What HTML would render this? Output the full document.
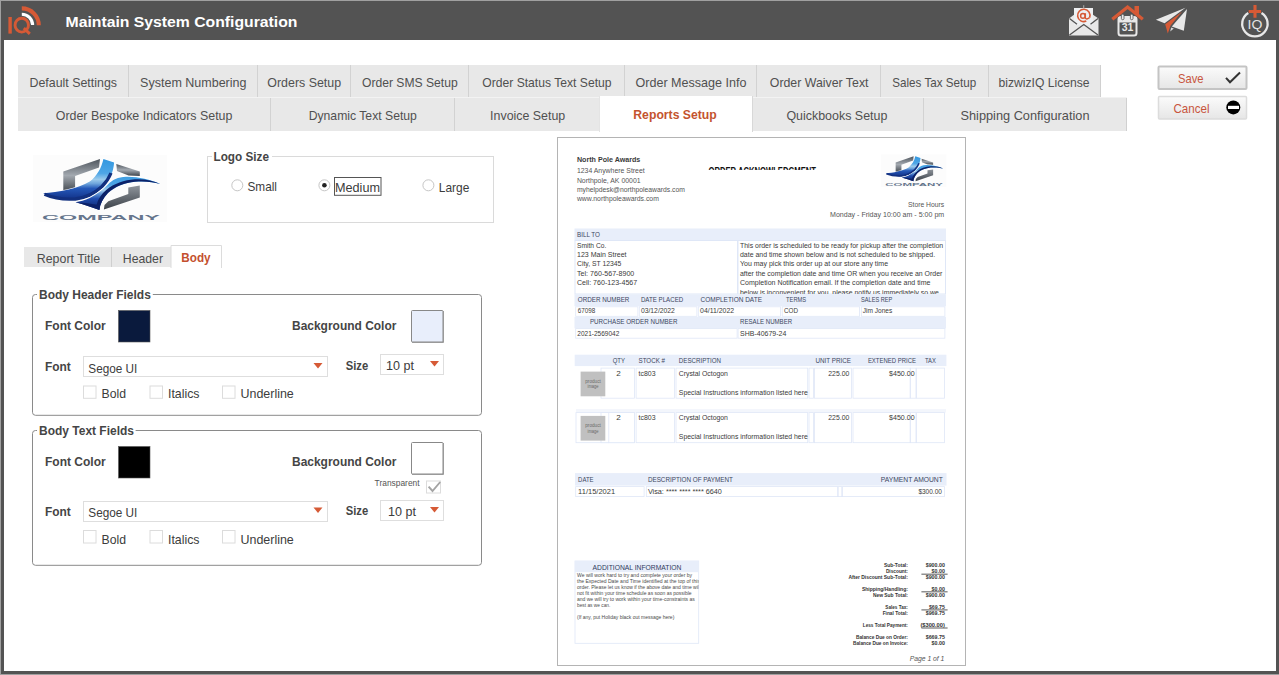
<!DOCTYPE html>
<html><head><meta charset="utf-8"><title>Maintain System Configuration</title>
<style>html,body{margin:0;padding:0;background:#fff;overflow:hidden;width:1279px;height:675px}
svg{display:block;font-family:"Liberation Sans", sans-serif}</style></head>
<body><svg width="1279" height="675" viewBox="0 0 1279 675">
<rect x="0" y="0" width="1279" height="675" fill="#ffffff" />
<rect x="0" y="0" width="1279" height="1" fill="#a0a0a0" />
<rect x="0" y="0" width="1" height="675" fill="#a0a0a0" />
<rect x="1" y="1" width="1278" height="39" fill="#535353" />
<rect x="1" y="40" width="3" height="634" fill="#535353" />
<rect x="1276" y="40" width="3" height="634" fill="#535353" />
<rect x="1" y="671" width="1278" height="3" fill="#535353" />
<rect x="0" y="674" width="1279" height="1" fill="#a0a0a0" />
<rect x="8.4" y="17" width="3.4" height="16.6" fill="#d65a36"/>
<ellipse cx="21.75" cy="25.15" rx="6.7" ry="6.95" fill="none" stroke="#d65a36" stroke-width="2.9"/>
<path d="M23.8 28.2 L29.8 33.8" stroke="#d65a36" stroke-width="3"/>
<path d="M21.8 14.2 A 10.8 10.8 0 0 1 32.6 25" fill="none" stroke="#ffffff" stroke-width="3.1"/>
<path d="M21.8 8.4 A 17 17 0 0 1 38.8 25.3" fill="none" stroke="#d65a36" stroke-width="4.1"/>
<text x="65.5" y="27" font-size="15" fill="#ffffff" font-weight="bold" textLength="232" lengthAdjust="spacingAndGlyphs" >Maintain System Configuration</text>
<path d="M1069 18.5 L1074 14.8 L1093 14.8 L1098.5 18.5 L1098.5 35.5 L1069 35.5 Z" fill="#e8e8e8"/>
<path d="M1074 25 L1074 8 L1093 8 L1093 25 Z" fill="#eef0f2"/>
<path d="M1089.6,17.6 A6.2,6.2 0 1 0 1086.3,21.1" fill="none" stroke="#d65a36" stroke-width="1.6"/>
<circle cx="1082.9" cy="15.9" r="2.3" fill="none" stroke="#d65a36" stroke-width="1.5"/>
<path d="M1085.3,13.2 L1085.3,17.6 Q1085.6,19.2 1087.4,18.8 L1089.6,17.6" fill="none" stroke="#d65a36" stroke-width="1.5"/>
<rect x="1083" y="5.2" width="1.3" height="3" fill="#9a9a9a"/>
<path d="M1069.5 35 L1083.8 24.5 L1098 35" fill="none" stroke="#535353" stroke-width="1.3"/>
<path d="M1069.5 18.5 L1077 24.2 M1098 18.5 L1090.5 24.2" fill="none" stroke="#535353" stroke-width="1.3"/>
<rect x="1118.5" y="17" width="18" height="18.5" rx="2.5" fill="#535353" stroke="#e8e8e8" stroke-width="2"/>
<rect x="1118.5" y="17" width="18" height="5.5" fill="#e8e8e8"/>
<rect x="1121.4" y="14.2" width="2.6" height="5.5" rx="1.2" fill="#e8e8e8" stroke="#535353" stroke-width="0.8"/>
<rect x="1130.4" y="14.2" width="2.6" height="5.5" rx="1.2" fill="#e8e8e8" stroke="#535353" stroke-width="0.8"/>
<text x="1127.6" y="31" font-size="10.3" font-weight="bold" fill="#e8e8e8" text-anchor="middle" textLength="11.7" lengthAdjust="spacingAndGlyphs">31</text>
<path d="M1112.3 19.3 L1127.6 7 L1142.8 19.3" fill="none" stroke="#d65a36" stroke-width="3.3"/>
<path d="M1134.5 6 L1139 6 L1139 15.5 L1134.5 12 Z" fill="#d65a36"/>
<path d="M1155.9,19.8 L1185.5,7.7 L1164.6,23.3 Z" fill="#e8e8e8"/>
<path d="M1182.2,11.6 L1165.2,24.2 L1167.8,33.5 L1170.6,25.5 Z" fill="#d65a36"/>
<path d="M1187,8.9 L1183.8,30.8 L1171.8,26.4 Z" fill="#e8e8e8"/>
<path d="M1170.2,31.6 L1171.2,27.6 L1173.8,28.4 Z" fill="#d8d8d8"/>
<path d="M1248.3 12.9 A 12.7 12.7 0 1 0 1261.5 12.9" fill="none" stroke="#e8e8e8" stroke-width="2.3"/>
<path d="M1248.7 11.45 L1261.1 11.45 M1255 5.1 L1255 17.8" stroke="#d65a36" stroke-width="3.1"/>
<text x="1247.5" y="29.3" font-size="13.5" fill="#e4e4e4" textLength="14.8" lengthAdjust="spacingAndGlyphs" >IQ</text>
<rect x="18" y="65" width="1083" height="32" fill="#e8e8e8" />
<rect x="1100" y="65" width="1" height="32" fill="#d0d0d0" />
<rect x="128" y="65" width="1" height="32" fill="#d2d2d2" />
<rect x="257" y="65" width="1" height="32" fill="#d2d2d2" />
<rect x="350" y="65" width="1" height="32" fill="#d2d2d2" />
<rect x="468" y="65" width="1" height="32" fill="#d2d2d2" />
<rect x="624" y="65" width="1" height="32" fill="#d2d2d2" />
<rect x="756" y="65" width="1" height="32" fill="#d2d2d2" />
<rect x="880" y="65" width="1" height="32" fill="#d2d2d2" />
<rect x="988" y="65" width="1" height="32" fill="#d2d2d2" />
<rect x="18" y="97" width="1109" height="1" fill="#f3f3f3" />
<rect x="18" y="98" width="1109" height="33" fill="#e8e8e8" />
<rect x="1126" y="98" width="1" height="33" fill="#d0d0d0" />
<rect x="270" y="98" width="1" height="33" fill="#d2d2d2" />
<rect x="454" y="98" width="1" height="33" fill="#d2d2d2" />
<rect x="599" y="98" width="1" height="33" fill="#d2d2d2" />
<rect x="752" y="98" width="1" height="33" fill="#d2d2d2" />
<rect x="923" y="98" width="1" height="33" fill="#d2d2d2" />
<rect x="599" y="96" width="153" height="36" fill="#ffffff" />
<rect x="599" y="96" width="1" height="36" fill="#e4e4e4" />
<rect x="752" y="96" width="1" height="36" fill="#d8d8d8" />
<text x="29.5" y="87" font-size="13" fill="#505050" textLength="87.5" lengthAdjust="spacingAndGlyphs" >Default Settings</text>
<text x="140.1" y="87" font-size="13" fill="#505050" textLength="106.4" lengthAdjust="spacingAndGlyphs" >System Numbering</text>
<text x="267.3" y="87" font-size="13" fill="#505050" textLength="73.80000000000001" lengthAdjust="spacingAndGlyphs" >Orders Setup</text>
<text x="362.0" y="87" font-size="13" fill="#505050" textLength="95.69999999999999" lengthAdjust="spacingAndGlyphs" >Order SMS Setup</text>
<text x="482.3" y="87" font-size="13" fill="#505050" textLength="129.2" lengthAdjust="spacingAndGlyphs" >Order Status Text Setup</text>
<text x="635.5" y="87" font-size="13" fill="#505050" textLength="111" lengthAdjust="spacingAndGlyphs" >Order Message Info</text>
<text x="769.8" y="87" font-size="13" fill="#505050" textLength="98.70000000000005" lengthAdjust="spacingAndGlyphs" >Order Waiver Text</text>
<text x="892.3" y="87" font-size="13" fill="#505050" textLength="83.80000000000007" lengthAdjust="spacingAndGlyphs" >Sales Tax Setup</text>
<text x="998.5" y="87" font-size="13" fill="#505050" textLength="91" lengthAdjust="spacingAndGlyphs" >bizwizIQ License</text>
<text x="55.75" y="120" font-size="13" fill="#505050" textLength="176.65" lengthAdjust="spacingAndGlyphs" >Order Bespoke Indicators Setup</text>
<text x="308.7" y="120" font-size="13" fill="#505050" textLength="108.19999999999999" lengthAdjust="spacingAndGlyphs" >Dynamic Text Setup</text>
<text x="490.1" y="120" font-size="13" fill="#505050" textLength="75.10000000000002" lengthAdjust="spacingAndGlyphs" >Invoice Setup</text>
<text x="786.4" y="120" font-size="13" fill="#505050" textLength="101.0" lengthAdjust="spacingAndGlyphs" >Quickbooks Setup</text>
<text x="960.5" y="120" font-size="13" fill="#505050" textLength="129" lengthAdjust="spacingAndGlyphs" >Shipping Configuration</text>
<text x="633.3" y="118.9" font-size="12.4" fill="#c4532e" font-weight="bold" textLength="83.5" lengthAdjust="spacingAndGlyphs" >Reports Setup</text>
<defs><linearGradient id="btn" x1="0" y1="0" x2="0" y2="1"><stop offset="0" stop-color="#fbfbfb"/><stop offset="1" stop-color="#e6e6e6"/></linearGradient>
<linearGradient id="hexg" x1="0" y1="0" x2="0" y2="1"><stop offset="0" stop-color="#4e555d"/><stop offset="0.5" stop-color="#a3a9b0"/><stop offset="1" stop-color="#3f454c"/></linearGradient>
<linearGradient id="blue1" x1="0" y1="0" x2="0" y2="1"><stop offset="0" stop-color="#3a9be0"/><stop offset="0.45" stop-color="#8ec3ea"/><stop offset="0.7" stop-color="#2a6cc0"/><stop offset="1" stop-color="#0f2f7a"/></linearGradient>
<linearGradient id="hexg2" x1="0" y1="0" x2="0" y2="1"><stop offset="0" stop-color="#8e949b"/><stop offset="1" stop-color="#3c4249"/></linearGradient>
<linearGradient id="blueA" x1="0" y1="0" x2="0" y2="1"><stop offset="0" stop-color="#3398e0"/><stop offset="0.35" stop-color="#4ea6e6"/><stop offset="0.5" stop-color="#9ccbec"/><stop offset="0.6" stop-color="#6fa6dc"/><stop offset="0.72" stop-color="#2458b8"/><stop offset="1" stop-color="#112f86"/></linearGradient>
<linearGradient id="blueB" x1="0" y1="0" x2="0" y2="1"><stop offset="0" stop-color="#3f9ee2"/><stop offset="0.25" stop-color="#4ea4e4"/><stop offset="0.4" stop-color="#a4cfee"/><stop offset="0.52" stop-color="#5d92d2"/><stop offset="0.66" stop-color="#1f4cae"/><stop offset="1" stop-color="#0b2166"/></linearGradient>
</defs>
<rect x="1158.5" y="66.5" width="88" height="22.5" fill="url(#btn)" stroke="#c4c4c4" stroke-width="2" rx="1"/>
<rect x="1158.5" y="96.5" width="88" height="22.5" fill="url(#btn)" stroke="#dcdcdc" stroke-width="1.5" rx="1"/>
<text x="1178" y="82.6" font-size="13" fill="#c8553d" textLength="25.5" lengthAdjust="spacingAndGlyphs" >Save</text>
<text x="1173.5" y="112.5" font-size="13" fill="#c8553d" textLength="36" lengthAdjust="spacingAndGlyphs" >Cancel</text>
<path d="M1226 77.8 L1230 82.2 L1240 72.5" fill="none" stroke="#333" stroke-width="2"/>
<circle cx="1233.3" cy="107.4" r="7" fill="#000"/>
<rect x="1228" y="105.8" width="11" height="3.2" fill="#fff"/>
<g transform="translate(33,155) scale(1.0) translate(-33,-155)">
<rect x="33" y="155" width="134" height="67" fill="#fcfcfc"/>
<path d="M100,159 L63.3,171.6 L63.3,192 L75.1,190 L75.1,176 L99,167.5 Z" fill="url(#hexg)"/>
<path d="M116.3,163.9 L139.8,171.6 L139.8,176 L128.5,175.5 L117,171 Z" fill="url(#hexg)"/>
<path d="M139.8,185.6 L139.8,197.6 L103.9,209.6 L104.5,205 L108.3,201.2 L128.3,194.1 L128.3,187.4 Z" fill="url(#hexg2)"/>
<path d="M43.1,193.2 C58,192.5 78,189 89.7,181.6 C97,176 101.5,168 103.4,159 L114.1,162.5 C113.5,172 110,180 103,187 C96,193.5 86,198.5 75.5,199.8 C64,200.5 52,198 43.1,193.2 Z" fill="url(#blueA)" stroke="#fff" stroke-width="1.4" paint-order="stroke"/>
<path d="M44.5,194.3 C53,198 64,199.8 75.5,199 C86,197.8 95,193 102,186.5 C106,182.5 109,178 111,173" fill="none" stroke="#12307f" stroke-width="3.3"/>
<path d="M160.3,183.9 C150,179.5 138,176.5 126,176.8 C118,177 112,180 108,184.5 C103,189.5 97,194 89.7,198 C85,200.3 80,201.5 75.5,202.2 C84,204.5 92,207 99.4,210 C100,204 103,198 108,193 C115,186.5 125,183 135,181.8 C145,181 153,182 160.3,183.9 Z" fill="url(#blueB)" stroke="#fff" stroke-width="1.4" paint-order="stroke"/>
<path d="M160.3,183.9 C153,182 145,181 135,181.8 C125,183 115,186.5 108,193 C103,198 100,204 99.4,210 C92,207 84,204.5 75.5,202.2 C84,202.6 91,203.8 96.6,204.8 C98,199 101.5,194 106.5,189.8 C114,183.6 124,180 135,179.3 C145,178.9 153,180.6 160.3,183.9 Z" fill="#0b2168"/>
<text x="101" y="219.5" font-size="7.8" font-weight="bold" fill="#65758c" text-anchor="middle" textLength="118" lengthAdjust="spacingAndGlyphs">COMPANY</text>
</g>
<rect x="207.5" y="156.5" width="286" height="66" fill="none" stroke="#dadada" stroke-width="1"/>
<rect x="212" y="150" width="60" height="10" fill="#ffffff" />
<text x="213.5" y="161.3" font-size="12" fill="#454545" font-weight="bold" textLength="55.5" lengthAdjust="spacingAndGlyphs" >Logo Size</text>
<circle cx="237.3" cy="185.3" r="5.5" fill="#fff" stroke="#c6c6c6" stroke-width="1"/>
<circle cx="324.4" cy="185.3" r="5.5" fill="#fff" stroke="#c6c6c6" stroke-width="1"/>
<circle cx="428.4" cy="185.3" r="5.5" fill="#fff" stroke="#c6c6c6" stroke-width="1"/>
<circle cx="324.4" cy="185.3" r="2.3" fill="#222"/>
<text x="247.5" y="191.3" font-size="13" fill="#3c3c3c" textLength="29.5" lengthAdjust="spacingAndGlyphs" >Small</text>
<text x="335" y="191.5" font-size="13" fill="#3c3c3c" textLength="45" lengthAdjust="spacingAndGlyphs" >Medium</text>
<text x="438.8" y="191.5" font-size="13" fill="#3c3c3c" textLength="30.5" lengthAdjust="spacingAndGlyphs" >Large</text>
<rect x="334.5" y="177.5" width="46.5" height="17.8" fill="none" stroke="#555" stroke-width="1"/>
<rect x="24" y="247" width="147" height="20" fill="#e8e8e8" />
<rect x="111" y="247" width="1" height="20" fill="#cfcfcf" />
<path d="M171 268 L171 245.5 L221.5 245.5 L221.5 268" fill="#fff" stroke="#dcdcdc" stroke-width="1"/>
<text x="36.8" y="262.5" font-size="13" fill="#4b4b4b" textLength="63.3" lengthAdjust="spacingAndGlyphs" >Report Title</text>
<text x="122.8" y="262.5" font-size="13" fill="#4b4b4b" textLength="40.2" lengthAdjust="spacingAndGlyphs" >Header</text>
<text x="181.3" y="261.7" font-size="13" fill="#c4502e" font-weight="bold" textLength="29.3" lengthAdjust="spacingAndGlyphs" >Body</text>
<rect x="32.5" y="294.5" width="449" height="120.80000000000001" rx="3" fill="none" stroke="#8a8a8a" stroke-width="1"/>
<rect x="37" y="288" width="115.8" height="10" fill="#ffffff" />
<text x="39" y="299.2" font-size="12" fill="#454545" font-weight="bold" textLength="111.8" lengthAdjust="spacingAndGlyphs" >Body Header Fields</text>
<text x="45" y="330.2" font-size="12" fill="#454545" font-weight="bold" textLength="60.7" lengthAdjust="spacingAndGlyphs" >Font Color</text>
<rect x="118.5" y="310.5" width="31.5" height="31.5" fill="#0a1a3d" stroke="#555" stroke-width="0.6"/>
<text x="292" y="330.2" font-size="12" fill="#454545" font-weight="bold" textLength="104.4" lengthAdjust="spacingAndGlyphs" >Background Color</text>
<rect x="411.5" y="310.5" width="31.5" height="31.5" rx="1" fill="#e8eefb" stroke="#888" stroke-width="1"/>
<path d="M443.5 311 L443.5 342.5 L412 342.5" fill="none" stroke="#999" stroke-width="1"/>
<text x="45" y="371.2" font-size="12" fill="#454545" font-weight="bold" textLength="25.8" lengthAdjust="spacingAndGlyphs" >Font</text>
<rect x="83.5" y="356.5" width="244" height="20" fill="#fff" stroke="#dedede" stroke-width="1"/>
<text x="88.3" y="372.6" font-size="13" fill="#3c3c3c" textLength="49" lengthAdjust="spacingAndGlyphs" >Segoe UI</text>
<path d="M313.5 363 L322.5 363 L318 368.5 Z" fill="#d65a36"/>
<text x="345.7" y="370" font-size="12" fill="#454545" font-weight="bold" textLength="22.5" lengthAdjust="spacingAndGlyphs" >Size</text>
<rect x="380.5" y="354.5" width="63" height="20" fill="#fff" stroke="#dedede" stroke-width="1"/>
<text x="386" y="370" font-size="13" fill="#3c3c3c" textLength="28" lengthAdjust="spacingAndGlyphs" >10 pt</text>
<path d="M430 361 L439 361 L434.5 366.5 Z" fill="#d65a36"/>
<rect x="83.5" y="386" width="12.5" height="12.3" fill="#fff" stroke="#dcdcdc" stroke-width="1"/>
<text x="101.5" y="398.2" font-size="13" fill="#3c3c3c" textLength="24.5" lengthAdjust="spacingAndGlyphs" >Bold</text>
<rect x="150.0" y="386" width="12.5" height="12.3" fill="#fff" stroke="#dcdcdc" stroke-width="1"/>
<text x="168.0" y="398.2" font-size="13" fill="#3c3c3c" textLength="31.5" lengthAdjust="spacingAndGlyphs" >Italics</text>
<rect x="222.5" y="386" width="12.5" height="12.3" fill="#fff" stroke="#dcdcdc" stroke-width="1"/>
<text x="240.5" y="398.2" font-size="13" fill="#3c3c3c" textLength="53.3" lengthAdjust="spacingAndGlyphs" >Underline</text>
<rect x="32.5" y="430.5" width="449" height="134.79999999999995" rx="3" fill="none" stroke="#8a8a8a" stroke-width="1"/>
<rect x="37" y="424" width="98.6" height="10" fill="#ffffff" />
<text x="39" y="435" font-size="12" fill="#454545" font-weight="bold" textLength="95" lengthAdjust="spacingAndGlyphs" >Body Text Fields</text>
<text x="45" y="465.8" font-size="12" fill="#454545" font-weight="bold" textLength="60.7" lengthAdjust="spacingAndGlyphs" >Font Color</text>
<rect x="118.5" y="446.5" width="31.5" height="31.5" fill="#000" stroke="#555" stroke-width="0.6"/>
<text x="292" y="465.8" font-size="12" fill="#454545" font-weight="bold" textLength="104.4" lengthAdjust="spacingAndGlyphs" >Background Color</text>
<rect x="411.5" y="442.5" width="31.5" height="31.5" rx="1" fill="#fff" stroke="#888" stroke-width="1"/>
<path d="M443.5 443 L443.5 474.5 L412 474.5" fill="none" stroke="#999" stroke-width="1"/>
<text x="374.6" y="486.4" font-size="9" fill="#555" textLength="45" lengthAdjust="spacingAndGlyphs" >Transparent</text>
<rect x="426.5" y="481" width="14" height="12" fill="#fff" stroke="#dcdcdc" stroke-width="1"/>
<path d="M428.6 486.6 L432.5 491 L440.2 482" fill="none" stroke="#a4a4a4" stroke-width="1.9"/>
<text x="45" y="515.7" font-size="12" fill="#454545" font-weight="bold" textLength="25.8" lengthAdjust="spacingAndGlyphs" >Font</text>
<rect x="83.5" y="501.5" width="244" height="20" fill="#fff" stroke="#dedede" stroke-width="1"/>
<text x="88.3" y="517.4" font-size="13" fill="#3c3c3c" textLength="49" lengthAdjust="spacingAndGlyphs" >Segoe UI</text>
<path d="M313.5 507.5 L322.5 507.5 L318 513 Z" fill="#d65a36"/>
<text x="345.7" y="515" font-size="12" fill="#454545" font-weight="bold" textLength="22.5" lengthAdjust="spacingAndGlyphs" >Size</text>
<rect x="380.5" y="500.5" width="63" height="20" fill="#fff" stroke="#dedede" stroke-width="1"/>
<text x="388" y="516" font-size="13" fill="#3c3c3c" textLength="28" lengthAdjust="spacingAndGlyphs" >10 pt</text>
<path d="M430 507 L439 507 L434.5 512.5 Z" fill="#d65a36"/>
<rect x="83.5" y="530.5" width="12.5" height="12.5" fill="#fff" stroke="#dcdcdc" stroke-width="1"/>
<text x="101.5" y="543.5" font-size="13" fill="#3c3c3c" textLength="24.5" lengthAdjust="spacingAndGlyphs" >Bold</text>
<rect x="150.0" y="530.5" width="12.5" height="12.5" fill="#fff" stroke="#dcdcdc" stroke-width="1"/>
<text x="168.0" y="543.5" font-size="13" fill="#3c3c3c" textLength="31.5" lengthAdjust="spacingAndGlyphs" >Italics</text>
<rect x="222.5" y="530.5" width="12.5" height="12.5" fill="#fff" stroke="#dcdcdc" stroke-width="1"/>
<text x="240.5" y="543.5" font-size="13" fill="#3c3c3c" textLength="53.3" lengthAdjust="spacingAndGlyphs" >Underline</text>
<rect x="557.5" y="137.5" width="408" height="528" fill="#fff" stroke="#b4b4b4" stroke-width="1"/>
<text x="576.9" y="162" font-size="6.6" fill="#3a3a3a" font-weight="bold" textLength="63.4" lengthAdjust="spacingAndGlyphs" >North Pole Awards</text>
<text x="576.9" y="172.9" font-size="6.6" fill="#555" textLength="67.8" lengthAdjust="spacingAndGlyphs" >1234 Anywhere Street</text>
<text x="576.9" y="182.5" font-size="6.6" fill="#555" textLength="63.7" lengthAdjust="spacingAndGlyphs" >Northpole, AK 00001</text>
<text x="576.9" y="191.7" font-size="6.6" fill="#555" textLength="108" lengthAdjust="spacingAndGlyphs" >myhelpdesk@northpoleawards.com</text>
<text x="576.9" y="201.3" font-size="6.6" fill="#555" textLength="82" lengthAdjust="spacingAndGlyphs" >www.northpoleawards.com</text>
<clipPath id="clipT"><rect x="700" y="160" width="130" height="10"/></clipPath>
<g clip-path="url(#clipT)">
<text x="708.5" y="174.7" font-size="10.5" fill="#111" font-weight="bold" textLength="107.5" lengthAdjust="spacingAndGlyphs" >ORDER ACKNOWLEDGMENT</text>
</g>
<g transform="translate(880.8,154.4) scale(0.49) translate(-33,-155)">
<rect x="33" y="155" width="134" height="67" fill="#fcfcfc"/>
<path d="M100,159 L63.3,171.6 L63.3,192 L75.1,190 L75.1,176 L99,167.5 Z" fill="url(#hexg)"/>
<path d="M116.3,163.9 L139.8,171.6 L139.8,176 L128.5,175.5 L117,171 Z" fill="url(#hexg)"/>
<path d="M139.8,185.6 L139.8,197.6 L103.9,209.6 L104.5,205 L108.3,201.2 L128.3,194.1 L128.3,187.4 Z" fill="url(#hexg2)"/>
<path d="M43.1,193.2 C58,192.5 78,189 89.7,181.6 C97,176 101.5,168 103.4,159 L114.1,162.5 C113.5,172 110,180 103,187 C96,193.5 86,198.5 75.5,199.8 C64,200.5 52,198 43.1,193.2 Z" fill="url(#blueA)" stroke="#fff" stroke-width="1.4" paint-order="stroke"/>
<path d="M44.5,194.3 C53,198 64,199.8 75.5,199 C86,197.8 95,193 102,186.5 C106,182.5 109,178 111,173" fill="none" stroke="#12307f" stroke-width="3.3"/>
<path d="M160.3,183.9 C150,179.5 138,176.5 126,176.8 C118,177 112,180 108,184.5 C103,189.5 97,194 89.7,198 C85,200.3 80,201.5 75.5,202.2 C84,204.5 92,207 99.4,210 C100,204 103,198 108,193 C115,186.5 125,183 135,181.8 C145,181 153,182 160.3,183.9 Z" fill="url(#blueB)" stroke="#fff" stroke-width="1.4" paint-order="stroke"/>
<path d="M160.3,183.9 C153,182 145,181 135,181.8 C125,183 115,186.5 108,193 C103,198 100,204 99.4,210 C92,207 84,204.5 75.5,202.2 C84,202.6 91,203.8 96.6,204.8 C98,199 101.5,194 106.5,189.8 C114,183.6 124,180 135,179.3 C145,178.9 153,180.6 160.3,183.9 Z" fill="#0b2168"/>
<text x="101" y="219.5" font-size="7.8" font-weight="bold" fill="#65758c" text-anchor="middle" textLength="118" lengthAdjust="spacingAndGlyphs">COMPANY</text>
</g>
<text x="944.2" y="206.9" font-size="6.6" fill="#555" text-anchor="end" textLength="36.2" lengthAdjust="spacingAndGlyphs" >Store Hours</text>
<text x="944.2" y="216.8" font-size="6.6" fill="#555" text-anchor="end" textLength="114.2" lengthAdjust="spacingAndGlyphs" >Monday - Friday 10:00 am - 5:00 pm</text>
<rect x="574.5" y="228.5" width="371.5" height="12" fill="#e8eefa" />
<text x="577" y="236.9" font-size="6.6" fill="#3c4660" textLength="23" lengthAdjust="spacingAndGlyphs" >BILL TO</text>
<rect x="575" y="240.5" width="162.5" height="53.5" fill="#fff" stroke="#dfe7f7" stroke-width="1"/>
<rect x="738" y="240.5" width="207.5" height="53.5" fill="#fff" stroke="#dfe7f7" stroke-width="1"/>
<text x="577" y="247.6" font-size="6.6" fill="#3a3a3a" textLength="29.3" lengthAdjust="spacingAndGlyphs" >Smith Co.</text>
<text x="577" y="256.98" font-size="6.6" fill="#3a3a3a" textLength="49.5" lengthAdjust="spacingAndGlyphs" >123 Main Street</text>
<text x="577" y="266.36" font-size="6.6" fill="#3a3a3a" textLength="44.3" lengthAdjust="spacingAndGlyphs" >City, ST 12345</text>
<text x="577" y="275.74" font-size="6.6" fill="#3a3a3a" textLength="57.3" lengthAdjust="spacingAndGlyphs" >Tel: 760-567-8900</text>
<text x="577" y="285.12" font-size="6.6" fill="#3a3a3a" textLength="60.2" lengthAdjust="spacingAndGlyphs" >Cell: 760-123-4567</text>
<clipPath id="clipB"><rect x="738" y="240" width="210" height="54"/></clipPath>
<g clip-path="url(#clipB)">
<text x="740" y="247.6" font-size="6.6" fill="#3a3a3a" textLength="203.2" lengthAdjust="spacingAndGlyphs" >This order is scheduled to be ready for pickup after the completion</text>
<text x="740" y="256.98" font-size="6.6" fill="#3a3a3a" textLength="195.1" lengthAdjust="spacingAndGlyphs" >date and time shown below and is not scheduled to be shipped.</text>
<text x="740" y="266.36" font-size="6.6" fill="#3a3a3a" textLength="148.1" lengthAdjust="spacingAndGlyphs" >You may pick this order up at our store any time</text>
<text x="740" y="275.74" font-size="6.6" fill="#3a3a3a" textLength="202.3" lengthAdjust="spacingAndGlyphs" >after the completion date and time OR when you receive an Order</text>
<text x="740" y="285.12" font-size="6.6" fill="#3a3a3a" textLength="190.4" lengthAdjust="spacingAndGlyphs" >Completion Notification email. If the completion date and time</text>
<text x="740" y="294.5" font-size="6.6" fill="#3a3a3a" textLength="198.8" lengthAdjust="spacingAndGlyphs" >below is inconvenient for you, please notify us immediately so we</text>
</g>
<rect x="574.5" y="294.3" width="371.5" height="12" fill="#e8eefa" />
<text x="577.8" y="302.3" font-size="6.4" fill="#3c4660" textLength="51.6" lengthAdjust="spacingAndGlyphs" >ORDER NUMBER</text>
<text x="640.9" y="302.3" font-size="6.4" fill="#3c4660" textLength="42.3" lengthAdjust="spacingAndGlyphs" >DATE PLACED</text>
<text x="700.5" y="302.3" font-size="6.4" fill="#3c4660" textLength="61.5" lengthAdjust="spacingAndGlyphs" >COMPLETION DATE</text>
<text x="786.1" y="302.3" font-size="6.4" fill="#3c4660" textLength="20.1" lengthAdjust="spacingAndGlyphs" >TERMS</text>
<text x="861" y="302.3" font-size="6.4" fill="#3c4660" textLength="31.4" lengthAdjust="spacingAndGlyphs" >SALES REP</text>
<rect x="575.7" y="306.8" width="62.19999999999993" height="9.5" fill="#fff" stroke="#dfe7f7" stroke-width="0.8"/>
<rect x="639.3" y="306.8" width="57.60000000000002" height="9.5" fill="#fff" stroke="#dfe7f7" stroke-width="0.8"/>
<rect x="698.3" y="306.8" width="82.10000000000002" height="9.5" fill="#fff" stroke="#dfe7f7" stroke-width="0.8"/>
<rect x="782.2" y="306.8" width="77.39999999999998" height="9.5" fill="#fff" stroke="#dfe7f7" stroke-width="0.8"/>
<rect x="861.3" y="306.8" width="83.60000000000002" height="9.5" fill="#fff" stroke="#dfe7f7" stroke-width="0.8"/>
<text x="577.8" y="313.4" font-size="6.4" fill="#3a3a3a" textLength="17.5" lengthAdjust="spacingAndGlyphs" >67098</text>
<text x="640.9" y="313.4" font-size="6.4" fill="#3a3a3a" textLength="34" lengthAdjust="spacingAndGlyphs" >03/12/2022</text>
<text x="700.1" y="313.4" font-size="6.4" fill="#3a3a3a" textLength="34" lengthAdjust="spacingAndGlyphs" >04/11/2022</text>
<text x="784" y="313.4" font-size="6.4" fill="#3a3a3a" textLength="14" lengthAdjust="spacingAndGlyphs" >COD</text>
<text x="862.8" y="313.4" font-size="6.4" fill="#3a3a3a" textLength="29.5" lengthAdjust="spacingAndGlyphs" >Jim Jones</text>
<rect x="574.5" y="316.9" width="371.5" height="11.5" fill="#e8eefa" />
<text x="589.9" y="323.7" font-size="6.4" fill="#3c4660" textLength="87.5" lengthAdjust="spacingAndGlyphs" >PURCHASE ORDER NUMBER</text>
<text x="740.1" y="323.7" font-size="6.4" fill="#3c4660" textLength="52" lengthAdjust="spacingAndGlyphs" >RESALE NUMBER</text>
<rect x="575.7" y="328.6" width="161.4" height="9.6" fill="#fff" stroke="#dfe7f7" stroke-width="0.8"/>
<rect x="738.1" y="328.6" width="206.8" height="9.6" fill="#fff" stroke="#dfe7f7" stroke-width="0.8"/>
<text x="577.3" y="335.6" font-size="6.4" fill="#3a3a3a" textLength="42" lengthAdjust="spacingAndGlyphs" >2021-2569042</text>
<text x="740.1" y="335.6" font-size="6.4" fill="#3a3a3a" textLength="46.2" lengthAdjust="spacingAndGlyphs" >SHB-40679-24</text>
<rect x="574.7" y="354.7" width="371.7" height="11.4" fill="#e8eefa" />
<text x="612.7" y="363" font-size="6.4" fill="#3c4660" textLength="12.2" lengthAdjust="spacingAndGlyphs" >QTY</text>
<text x="638.5" y="363" font-size="6.4" fill="#3c4660" textLength="26.6" lengthAdjust="spacingAndGlyphs" >STOCK #</text>
<text x="678.8" y="363" font-size="6.4" fill="#3c4660" textLength="42.3" lengthAdjust="spacingAndGlyphs" >DESCRIPTION</text>
<text x="815.5" y="363" font-size="6.4" fill="#3c4660" textLength="35.5" lengthAdjust="spacingAndGlyphs" >UNIT PRICE</text>
<text x="867.9" y="363" font-size="6.4" fill="#3c4660" textLength="48.1" lengthAdjust="spacingAndGlyphs" >EXTENED PRICE</text>
<text x="925" y="363" font-size="6.4" fill="#3c4660" textLength="10.9" lengthAdjust="spacingAndGlyphs" >TAX</text>
<rect x="601" y="368.1" width="33.60000000000002" height="30.099999999999966" fill="#fff" stroke="#dfe7f7" stroke-width="0.8"/>
<rect x="636.1" y="368.1" width="38.39999999999998" height="30.099999999999966" fill="#fff" stroke="#dfe7f7" stroke-width="0.8"/>
<rect x="676" y="368.1" width="131.70000000000005" height="30.099999999999966" fill="#fff" stroke="#dfe7f7" stroke-width="0.8"/>
<rect x="809" y="368.1" width="4.5" height="30.099999999999966" fill="#fff" stroke="#dfe7f7" stroke-width="0.8"/>
<rect x="814.4" y="368.1" width="37.10000000000002" height="30.099999999999966" fill="#fff" stroke="#dfe7f7" stroke-width="0.8"/>
<rect x="853" y="368.1" width="57.10000000000002" height="30.099999999999966" fill="#fff" stroke="#dfe7f7" stroke-width="0.8"/>
<rect x="910.5" y="368.1" width="5.5" height="30.099999999999966" fill="#fff" stroke="#dfe7f7" stroke-width="0.8"/>
<rect x="916.4" y="368.1" width="28.100000000000023" height="30.099999999999966" fill="#fff" stroke="#dfe7f7" stroke-width="0.8"/>
<rect x="576" y="409.1" width="370" height="3.5" fill="#f3f6fc" />
<rect x="576" y="412.6" width="32.8" height="30.1" fill="#fff" stroke="#dfe7f7" stroke-width="0.8"/>
<rect x="601" y="412.6" width="33.60000000000002" height="30.099999999999966" fill="#fff" stroke="#dfe7f7" stroke-width="0.8"/>
<rect x="636.1" y="412.6" width="38.39999999999998" height="30.099999999999966" fill="#fff" stroke="#dfe7f7" stroke-width="0.8"/>
<rect x="676" y="412.6" width="131.70000000000005" height="30.099999999999966" fill="#fff" stroke="#dfe7f7" stroke-width="0.8"/>
<rect x="809" y="412.6" width="4.5" height="30.099999999999966" fill="#fff" stroke="#dfe7f7" stroke-width="0.8"/>
<rect x="814.4" y="412.6" width="37.10000000000002" height="30.099999999999966" fill="#fff" stroke="#dfe7f7" stroke-width="0.8"/>
<rect x="853" y="412.6" width="57.10000000000002" height="30.099999999999966" fill="#fff" stroke="#dfe7f7" stroke-width="0.8"/>
<rect x="910.5" y="412.6" width="5.5" height="30.099999999999966" fill="#fff" stroke="#dfe7f7" stroke-width="0.8"/>
<rect x="916.4" y="412.6" width="28.100000000000023" height="30.099999999999966" fill="#fff" stroke="#dfe7f7" stroke-width="0.8"/>
<rect x="608.8" y="412.6" width="25.8" height="30.1" fill="#fff" stroke="#dfe7f7" stroke-width="0.8"/>
<rect x="580.6" y="371.6" width="24.7" height="24.7" fill="#c0c0c0" />
<text x="593" y="382.6" font-size="4.6" fill="#6a6a6a" text-anchor="middle" textLength="15.5" lengthAdjust="spacingAndGlyphs" >product</text>
<text x="593" y="388.3" font-size="4.6" fill="#6a6a6a" text-anchor="middle" textLength="11" lengthAdjust="spacingAndGlyphs" >image</text>
<text x="616.3" y="376" font-size="6.6" fill="#3a3a3a" textLength="4.5" lengthAdjust="spacingAndGlyphs" >2</text>
<text x="638.5" y="376" font-size="6.6" fill="#3a3a3a" textLength="17" lengthAdjust="spacingAndGlyphs" >tc803</text>
<text x="678.8" y="376" font-size="6.6" fill="#3a3a3a" textLength="49.1" lengthAdjust="spacingAndGlyphs" >Crystal Octogon</text>
<text x="678.8" y="394.7" font-size="6.6" fill="#3a3a3a" textLength="129" lengthAdjust="spacingAndGlyphs" >Special Instructions information listed here</text>
<text x="849.3" y="376" font-size="6.9" fill="#3a3a3a" text-anchor="end" textLength="21" lengthAdjust="spacingAndGlyphs" >225.00</text>
<text x="914.6" y="376" font-size="6.9" fill="#3a3a3a" text-anchor="end" textLength="25.5" lengthAdjust="spacingAndGlyphs" >$450.00</text>
<rect x="580.6" y="415.90000000000003" width="24.7" height="24.7" fill="#c0c0c0" />
<text x="593" y="426.90000000000003" font-size="4.6" fill="#6a6a6a" text-anchor="middle" textLength="15.5" lengthAdjust="spacingAndGlyphs" >product</text>
<text x="593" y="432.6" font-size="4.6" fill="#6a6a6a" text-anchor="middle" textLength="11" lengthAdjust="spacingAndGlyphs" >image</text>
<text x="616.3" y="420.3" font-size="6.6" fill="#3a3a3a" textLength="4.5" lengthAdjust="spacingAndGlyphs" >2</text>
<text x="638.5" y="420.3" font-size="6.6" fill="#3a3a3a" textLength="17" lengthAdjust="spacingAndGlyphs" >tc803</text>
<text x="678.8" y="420.3" font-size="6.6" fill="#3a3a3a" textLength="49.1" lengthAdjust="spacingAndGlyphs" >Crystal Octogon</text>
<text x="678.8" y="439.0" font-size="6.6" fill="#3a3a3a" textLength="129" lengthAdjust="spacingAndGlyphs" >Special Instructions information listed here</text>
<text x="849.3" y="420.3" font-size="6.9" fill="#3a3a3a" text-anchor="end" textLength="21" lengthAdjust="spacingAndGlyphs" >225.00</text>
<text x="914.6" y="420.3" font-size="6.9" fill="#3a3a3a" text-anchor="end" textLength="25.5" lengthAdjust="spacingAndGlyphs" >$450.00</text>
<rect x="575" y="473.1" width="371.5" height="12.5" fill="#e8eefa" />
<text x="578.1" y="481.9" font-size="6.4" fill="#3c4660" textLength="15.5" lengthAdjust="spacingAndGlyphs" >DATE</text>
<text x="647.9" y="481.9" font-size="6.4" fill="#3c4660" textLength="85" lengthAdjust="spacingAndGlyphs" >DESCRIPTION OF PAYMENT</text>
<text x="942.8" y="481.9" font-size="6.4" fill="#3c4660" text-anchor="end" textLength="62" lengthAdjust="spacingAndGlyphs" >PAYMENT AMOUNT</text>
<rect x="575.7" y="486.6" width="68.39999999999998" height="10" fill="#fff" stroke="#dfe7f7" stroke-width="0.8"/>
<rect x="646.3" y="486.6" width="191.4000000000001" height="10" fill="#fff" stroke="#dfe7f7" stroke-width="0.8"/>
<rect x="838.2" y="486.6" width="3.599999999999909" height="10" fill="#fff" stroke="#dfe7f7" stroke-width="0.8"/>
<rect x="842.4" y="486.6" width="102.0" height="10" fill="#fff" stroke="#dfe7f7" stroke-width="0.8"/>
<text x="578.1" y="493.8" font-size="6.4" fill="#3a3a3a" textLength="37" lengthAdjust="spacingAndGlyphs" >11/15/2021</text>
<text x="647.9" y="493.8" font-size="6.4" fill="#3a3a3a" textLength="74" lengthAdjust="spacingAndGlyphs" >Visa: **** **** **** 6640</text>
<text x="941.9" y="493.8" font-size="6.4" fill="#3a3a3a" text-anchor="end" textLength="23.5" lengthAdjust="spacingAndGlyphs" >$300.00</text>
<rect x="575" y="561" width="123.7" height="82.3" fill="#fff" stroke="#dfe7f7" stroke-width="0.8"/>
<rect x="575" y="561" width="123.7" height="11.2" fill="#e8eefa" />
<text x="592.6" y="569.6" font-size="7" fill="#2e3a5c" textLength="88.8" lengthAdjust="spacingAndGlyphs" >ADDITIONAL INFORMATION</text>
<clipPath id="clipA"><rect x="575" y="572" width="123.7" height="72"/></clipPath>
<g clip-path="url(#clipA)">
<text x="577" y="576.7" font-size="5" fill="#4a4a4a" textLength="115.1" lengthAdjust="spacingAndGlyphs" >We will work hard to try and complete your order by</text>
<text x="577" y="582.6800000000001" font-size="5" fill="#4a4a4a" textLength="123" lengthAdjust="spacingAndGlyphs" >the Expected Date and Time identified at the top of this</text>
<text x="577" y="588.6600000000001" font-size="5" fill="#4a4a4a" textLength="123" lengthAdjust="spacingAndGlyphs" >order. Please let us know if the above date and time will</text>
<text x="577" y="594.6400000000001" font-size="5" fill="#4a4a4a" textLength="114.6" lengthAdjust="spacingAndGlyphs" >not fit within your time schedule as soon as possible</text>
<text x="577" y="600.62" font-size="5" fill="#4a4a4a" textLength="117.8" lengthAdjust="spacingAndGlyphs" >and we will try to work within your time-constraints as</text>
<text x="577" y="606.6" font-size="5" fill="#4a4a4a" textLength="33.3" lengthAdjust="spacingAndGlyphs" >best as we can.</text>
<text x="577" y="619.1" font-size="5" fill="#4a4a4a" textLength="97.3" lengthAdjust="spacingAndGlyphs" >(If any, put Holiday black out message here)</text>
</g>
<text x="907.9" y="566.9" font-size="5" fill="#333" font-weight="bold" text-anchor="end" textLength="24.0" lengthAdjust="spacingAndGlyphs" >Sub-Total:</text>
<text x="944.9" y="566.9" font-size="5" fill="#333" font-weight="bold" text-anchor="end" textLength="19.2" lengthAdjust="spacingAndGlyphs" >$900.00</text>
<text x="907.9" y="573.1" font-size="5" fill="#333" font-weight="bold" text-anchor="end" textLength="22.0" lengthAdjust="spacingAndGlyphs" >Discount:</text>
<text x="944.9" y="573.1" font-size="5" fill="#333" font-weight="bold" text-anchor="end" textLength="13.3" lengthAdjust="spacingAndGlyphs" >$0.00</text>
<rect x="921.4" y="573.6" width="26.2" height="1.2" fill="#777" />
<text x="907.9" y="578.9" font-size="5" fill="#333" font-weight="bold" text-anchor="end" textLength="59.5" lengthAdjust="spacingAndGlyphs" >After Discount Sub-Total:</text>
<text x="944.9" y="578.9" font-size="5" fill="#333" font-weight="bold" text-anchor="end" textLength="19.2" lengthAdjust="spacingAndGlyphs" >$900.00</text>
<text x="907.9" y="590.7" font-size="5" fill="#333" font-weight="bold" text-anchor="end" textLength="46.0" lengthAdjust="spacingAndGlyphs" >Shipping/Handling:</text>
<text x="944.9" y="590.7" font-size="5" fill="#333" font-weight="bold" text-anchor="end" textLength="13.3" lengthAdjust="spacingAndGlyphs" >$0.00</text>
<rect x="921.4" y="591.2" width="26.2" height="1.2" fill="#777" />
<text x="907.9" y="596.7" font-size="5" fill="#333" font-weight="bold" text-anchor="end" textLength="35.0" lengthAdjust="spacingAndGlyphs" >New Sub Total:</text>
<text x="944.9" y="596.7" font-size="5" fill="#333" font-weight="bold" text-anchor="end" textLength="19.2" lengthAdjust="spacingAndGlyphs" >$900.00</text>
<text x="907.9" y="608.8" font-size="5" fill="#333" font-weight="bold" text-anchor="end" textLength="22.600000000000023" lengthAdjust="spacingAndGlyphs" >Sales Tax:</text>
<text x="944.9" y="608.8" font-size="5" fill="#333" font-weight="bold" text-anchor="end" textLength="16" lengthAdjust="spacingAndGlyphs" >$69.75</text>
<rect x="921.4" y="609.3" width="26.2" height="1.2" fill="#777" />
<text x="907.9" y="614.9" font-size="5" fill="#333" font-weight="bold" text-anchor="end" textLength="25.199999999999932" lengthAdjust="spacingAndGlyphs" >Final Total:</text>
<text x="944.9" y="614.9" font-size="5" fill="#333" font-weight="bold" text-anchor="end" textLength="19.2" lengthAdjust="spacingAndGlyphs" >$969.75</text>
<text x="907.9" y="626.9" font-size="5" fill="#333" font-weight="bold" text-anchor="end" textLength="45.10000000000002" lengthAdjust="spacingAndGlyphs" >Less Total Payment:</text>
<text x="944.9" y="626.9" font-size="5" fill="#333" font-weight="bold" text-anchor="end" textLength="24.5" lengthAdjust="spacingAndGlyphs" >($300.00)</text>
<rect x="921.4" y="627.4" width="26.2" height="1.2" fill="#777" />
<text x="907.9" y="638.9" font-size="5" fill="#333" font-weight="bold" text-anchor="end" textLength="51.89999999999998" lengthAdjust="spacingAndGlyphs" >Balance Due on Order:</text>
<text x="944.9" y="638.9" font-size="5" fill="#333" font-weight="bold" text-anchor="end" textLength="19.2" lengthAdjust="spacingAndGlyphs" >$669.75</text>
<text x="907.9" y="644.7" font-size="5" fill="#333" font-weight="bold" text-anchor="end" textLength="54.89999999999998" lengthAdjust="spacingAndGlyphs" >Balance Due on Invoice:</text>
<text x="944.9" y="644.7" font-size="5" fill="#333" font-weight="bold" text-anchor="end" textLength="13.3" lengthAdjust="spacingAndGlyphs" >$0.00</text>
<text x="944.4" y="661.1" font-size="7" fill="#555" font-style="italic" text-anchor="end" textLength="34.7" lengthAdjust="spacingAndGlyphs" >Page 1 of 1</text>
</svg></body></html>
